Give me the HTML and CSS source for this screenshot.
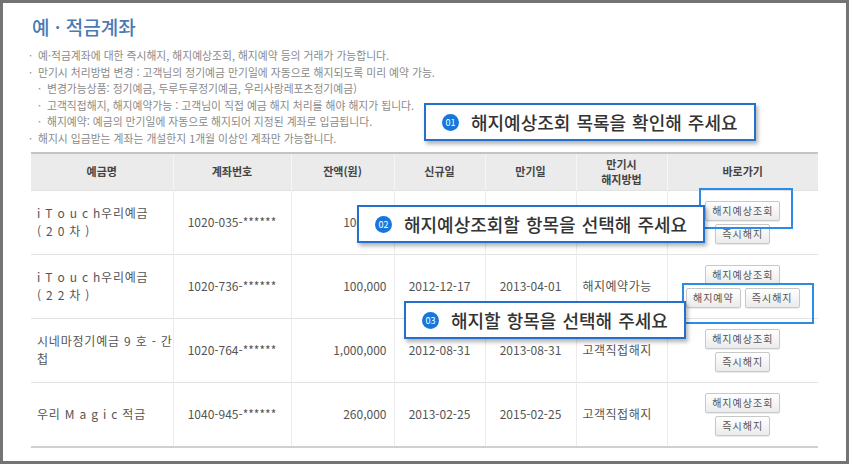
FILE: index.html
```html
<!DOCTYPE html>
<html lang="ko">
<head>
<meta charset="UTF-8">
<title>예·적금계좌</title>
<link rel="stylesheet" href="styles.css">
</head>
<body>
<div class="frame">
  <h2 class="title">예 · 적금계좌</h2>
  <ul class="notes">
    <li>예·적금계좌에 대한 즉시해지, 해지예상조회, 해지예약 등의 거래가 가능합니다.</li>
    <li>만기시 처리방법 변경 : 고객님의 정기예금 만기일에 자동으로 해지되도록 미리 예약 가능.</li>
    <li class="sub">변경가능상품: 정기예금, 두루두루정기예금, 우리사랑레포츠정기예금)</li>
    <li class="sub">고객직접해지, 해지예약가능 : 고객님이 직접 예금 해지 처리를 해야 해지가 됩니다.</li>
    <li class="sub">해지예약: 예금의 만기일에 자동으로 해지되어 지정된 계좌로 입금됩니다.</li>
    <li>해지시 입금받는 계좌는 개설한지 1개월 이상인 계좌만 가능합니다.</li>
  </ul>

  <table class="accounts">
    <colgroup>
      <col style="width:142px"><col style="width:118px"><col style="width:103px">
      <col style="width:91px"><col style="width:91px"><col style="width:91px"><col style="width:151px">
    </colgroup>
    <thead>
      <tr>
        <th>예금명</th>
        <th>계좌번호</th>
        <th>잔액(원)</th>
        <th>신규일</th>
        <th>만기일</th>
        <th>만기시<br>해지방법</th>
        <th>바로가기</th>
      </tr>
    </thead>
    <tbody>
      <tr>
        <td class="name">i T o u c h우리예금<br>( 2 0 차 )</td>
        <td>1020-035-******</td>
        <td class="amount">100,000</td>
        <td></td>
        <td></td>
        <td class="method"></td>
        <td>
          <div class="actions">
            <button class="btn">해지예상조회</button>
            <button class="btn">즉시해지</button>
          </div>
        </td>
      </tr>
      <tr>
        <td class="name">i T o u c h우리예금<br>( 2 2 차 )</td>
        <td>1020-736-******</td>
        <td class="amount">100,000</td>
        <td>2012-12-17</td>
        <td>2013-04-01</td>
        <td class="method">해지예약가능</td>
        <td>
          <div class="actions">
            <button class="btn">해지예상조회</button>
            <div class="btn-row">
              <button class="btn">해지예약</button>
              <button class="btn">즉시해지</button>
            </div>
          </div>
        </td>
      </tr>
      <tr>
        <td class="name">시네마정기예금 9 호 - 간<br>첩</td>
        <td>1020-764-******</td>
        <td class="amount">1,000,000</td>
        <td>2012-08-31</td>
        <td>2013-08-31</td>
        <td class="method">고객직접해지</td>
        <td>
          <div class="actions">
            <button class="btn">해지예상조회</button>
            <button class="btn">즉시해지</button>
          </div>
        </td>
      </tr>
      <tr>
        <td class="name">우리 M a g i c 적금</td>
        <td>1040-945-******</td>
        <td class="amount">260,000</td>
        <td>2013-02-25</td>
        <td>2015-02-25</td>
        <td class="method">고객직접해지</td>
        <td>
          <div class="actions">
            <button class="btn">해지예상조회</button>
            <button class="btn">즉시해지</button>
          </div>
        </td>
      </tr>
    </tbody>
  </table>

  <!-- guide overlays -->
  <div class="highlight hl-1"></div>
  <div class="highlight hl-2"></div>

  <div class="callout callout-1"><span class="badge">01</span>해지예상조회 목록을 확인해 주세요</div>
  <div class="callout callout-2"><span class="badge">02</span>해지예상조회할 항목을 선택해 주세요</div>
  <div class="callout callout-3"><span class="badge">03</span>해지할 항목을 선택해 주세요</div>
</div>
</body>
</html>
```

FILE: styles.css
```css
body {
    margin: 0;
    font-family: "Noto Sans CJK KR", "Noto Sans", sans-serif;
    background: #fff;
}
.frame {
    position: relative;
    width: 849px;
    height: 464px;
    box-sizing: border-box;
    border: 3px solid #747474;
    padding: 12px 0 0 28px;
    overflow: hidden;
}
.title {
    margin: 0 0 0 1px;
    font-size: 19px;
    line-height: 24px;
    font-weight: 500;
    color: #4a7bb3;
}
.notes {
    list-style: none;
    margin: 8px 0 5px;
    padding: 0;
    font-size: 10.8px;
    line-height: 16.6px;
    color: #8a8a8a;
}
.notes li::before {
    content: "·";
    display: inline-block;
    width: 9px;
    margin-left: -2px;
}
.notes li.sub {
    padding-left: 9px;
}

/* table */
.accounts {
    width: 787px;
    border-collapse: collapse;
    table-layout: fixed;
    border-top: 2px solid #c4c4c4;
    border-bottom: 2px solid #d0d0d0;
    font-size: 12px;
    color: #555;
}
.accounts th {
    height: 36px;
    padding: 0;
    background: #ebebeb;
    border-left: 1px solid #f6f6f6;
    font-size: 11px;
    line-height: 15px;
    font-weight: 700;
    color: #444;
}
.accounts td {
    height: 63px;
    padding: 0;
    border-top: 1px solid #e2e2e2;
    border-left: 1px solid #ececec;
    text-align: center;
    line-height: 18px;
}
.accounts th:first-child,
.accounts td:first-child {
    border-left: none;
}
.accounts td.name {
    text-align: left;
    padding-left: 6px;
    letter-spacing: 0.8px;
    white-space: nowrap;
}
.accounts td.amount {
    text-align: right;
    padding-right: 7px;
}
.accounts td.method {
    text-align: left;
    padding-left: 6px;
    letter-spacing: 0.5px;
}
.actions {
    display: flex;
    flex-direction: column;
    align-items: center;
    gap: 3px;
}
.btn-row {
    display: flex;
    gap: 4px;
}
.btn {
    height: 20px;
    padding: 0 6px;
    border: 1px solid #c8c8c8;
    border-radius: 2px;
    background: linear-gradient(#ffffff, #ebebeb);
    font-family: inherit;
    font-size: 10px;
    letter-spacing: 1px;
    line-height: 18px;
    color: #555;
    box-shadow: 0 1px 1px rgba(0, 0, 0, 0.08);
}

/* guide overlays */
.highlight {
    position: absolute;
    border: 2px solid #2b8ce6;
    box-sizing: border-box;
}
.hl-1 {
    left: 696px;
    top: 185px;
    width: 94px;
    height: 41px;
}
.hl-2 {
    left: 679px;
    top: 280px;
    width: 132px;
    height: 41px;
}
.callout {
    position: absolute;
    display: flex;
    align-items: center;
    gap: 12px;
    height: 38px;
    box-sizing: border-box;
    padding: 0 16px;
    background: #fff;
    border: 2px solid #2470cc;
    box-shadow: 2px 3px 4px rgba(0, 0, 0, 0.3);
    font-size: 18px;
    font-weight: 500;
    word-spacing: 1px;
    color: #333;
    white-space: nowrap;
}
.badge {
    display: inline-flex;
    align-items: center;
    justify-content: center;
    width: 17px;
    height: 17px;
    border-radius: 50%;
    background: #1877dc;
    color: #fff;
    font-size: 9px;
    font-weight: 400;
    word-spacing: 0;
}
.callout-1 {
    left: 421px;
    top: 100px;
}
.callout-2 {
    left: 354px;
    top: 202px;
}
.callout-3 {
    left: 401px;
    top: 298px;
}
```
